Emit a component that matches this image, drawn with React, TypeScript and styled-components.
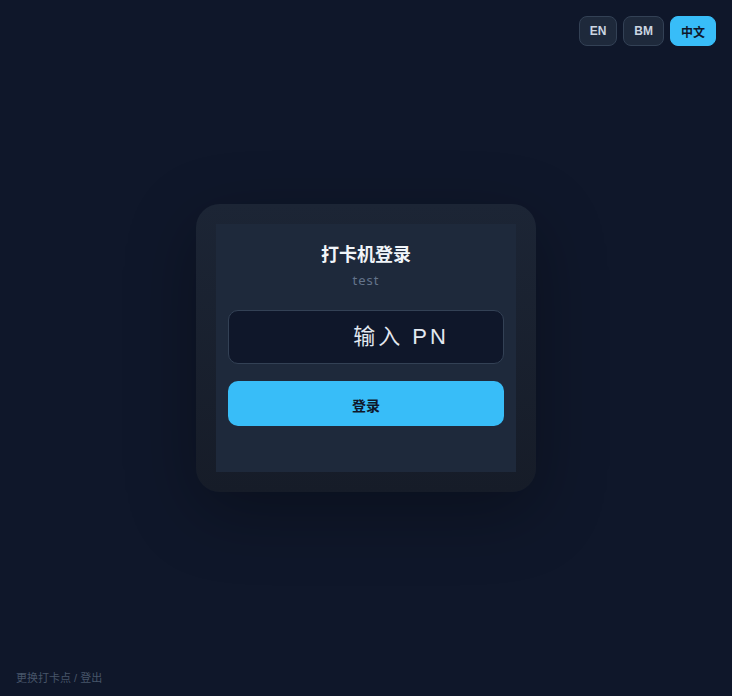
import React, { useState } from "react";
import styled, { createGlobalStyle } from "styled-components";

const GlobalStyle = createGlobalStyle`
  html, body {
    margin: 0;
    padding: 0;
    background: #0f172a;
  }
  body {
    font-family: "Liberation Sans", "Noto Sans CJK SC", sans-serif;
  }
  * {
    box-sizing: border-box;
  }
`;

const LANGS = ["EN", "BM", "中文"];

export default function App() {
  const [lang, setLang] = useState("中文");
  const [pn, setPn] = useState("");

  return (
    <>
      <GlobalStyle />
      <Page>
        <LangBar>
          {LANGS.map((l) => (
            <LangButton key={l} $active={l === lang} onClick={() => setLang(l)}>
              {l}
            </LangButton>
          ))}
        </LangBar>

        <Center>
          <Card>
            <Panel>
              <Title>打卡机登录</Title>
              <Subtitle>test</Subtitle>
              <PnInput value={pn} onChange={(e) => setPn(e.target.value)} placeholder="输入 PN" />
              <LoginButton>登录</LoginButton>
            </Panel>
          </Card>
        </Center>

        <Footer>更换打卡点 / 登出</Footer>
      </Page>
    </>
  );
}

const Page = styled.div`
  position: relative;
  width: 100%;
  height: 696px;
  background: #0f172a;
  overflow: hidden;
`;

const LangBar = styled.div`
  position: absolute;
  top: 16px;
  right: 16px;
  display: flex;
  gap: 6px;
`;

const LangButton = styled.button<{ $active: boolean }>`
  height: 30px;
  padding: 0 10px;
  border-radius: 8px;
  border: 1px solid ${({ $active }) => ($active ? "#38bdf8" : "#334155")};
  background: ${({ $active }) => ($active ? "#38bdf8" : "#1e293b")};
  color: ${({ $active }) => ($active ? "#0f172a" : "#cbd5e1")};
  font-family: "Liberation Sans", "Noto Sans CJK SC", sans-serif;
  font-size: 12px;
  font-weight: 700;
  cursor: pointer;
`;

const Center = styled.div`
  display: flex;
  justify-content: center;
  padding-top: 204px;
`;

const Card = styled.div`
  width: 340px;
  padding: 20px;
  border-radius: 24px;
  background: linear-gradient(180deg, #1c2535 0%, #161c28 100%);
  box-shadow: 0 20px 70px rgba(0, 0, 0, 0.3);
`;

const Panel = styled.div`
  display: flex;
  flex-direction: column;
  align-items: center;
  background: #1e293b;
  padding: 17px 12px 46px;
`;

const Title = styled.div`
  color: #f1f5f9;
  font-family: "Noto Sans CJK SC", sans-serif;
  font-size: 18px;
  font-weight: 700;
  line-height: 24px;
`;

const Subtitle = styled.div`
  margin-top: 6px;
  color: #64748b;
  font-family: "Noto Sans", sans-serif;
  font-size: 13px;
  letter-spacing: 1px;
  line-height: 18px;
`;

const PnInput = styled.input`
  margin-top: 21px;
  width: 100%;
  height: 54px;
  border-radius: 10px;
  border: 1px solid #334155;
  background: #0f172a;
  color: #f1f5f9;
  font-family: "Liberation Sans", "Noto Sans CJK SC", sans-serif;
  font-size: 22px;
  letter-spacing: 3px;
  text-align: center;
  padding: 0 0 0 70px;
  outline: none;

  &::placeholder {
    color: #e2e8f0;
    opacity: 1;
  }
`;

const LoginButton = styled.button`
  margin-top: 17px;
  width: 100%;
  height: 45px;
  border: none;
  border-radius: 10px;
  background: #38bdf8;
  color: #0f172a;
  font-family: "Noto Sans CJK SC", sans-serif;
  font-size: 14px;
  font-weight: 700;
  padding-top: 3px;
  cursor: pointer;
`;

const Footer = styled.div`
  position: absolute;
  left: 16px;
  bottom: 11px;
  color: #475569;
  font-family: "Liberation Sans", "Noto Sans CJK SC", sans-serif;
  font-size: 11px;
`;
